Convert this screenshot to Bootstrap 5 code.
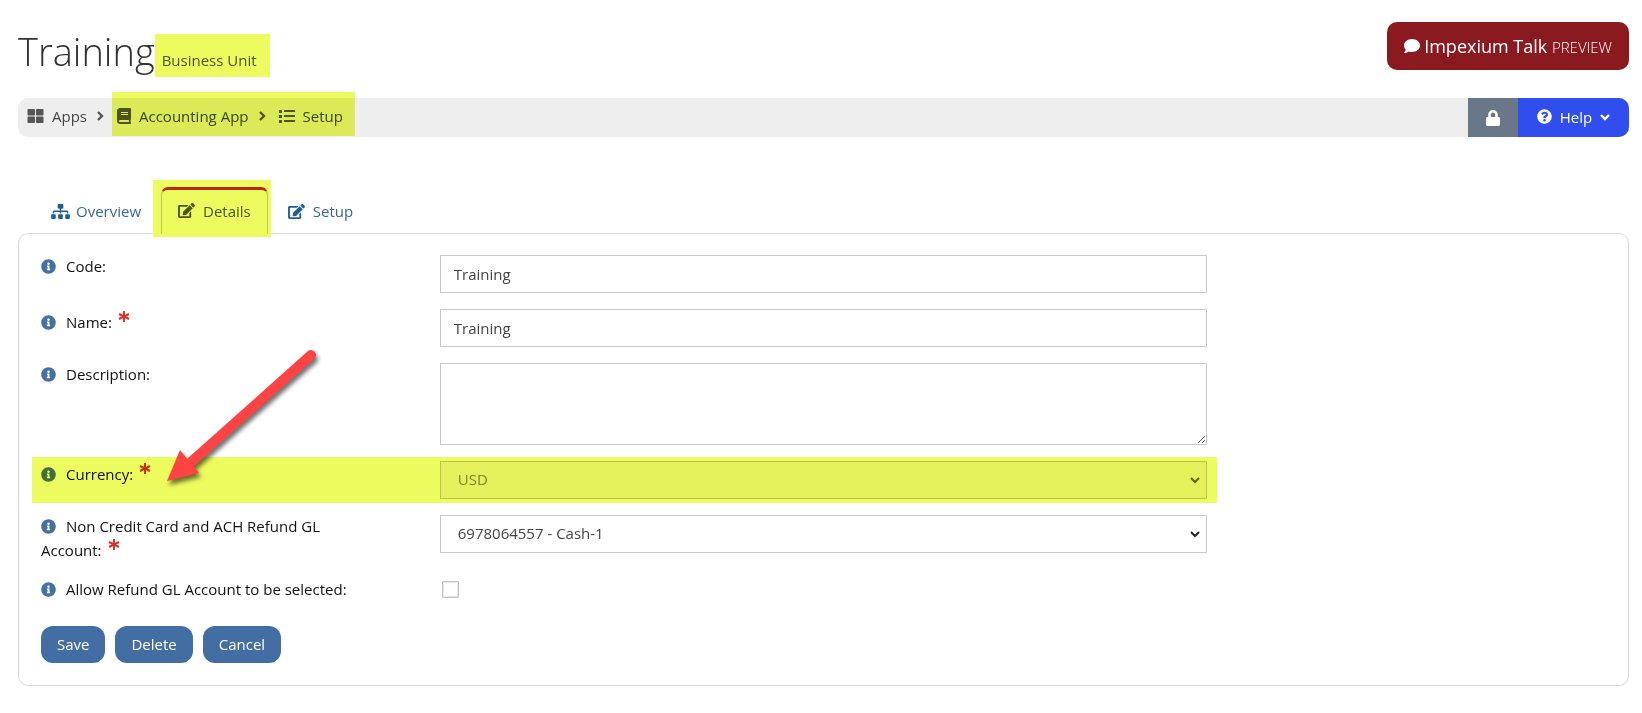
<!DOCTYPE html>
<html lang="en">
<head>
<meta charset="utf-8">
<meta name="viewport" content="width=device-width, initial-scale=1">
<title>Training - Business Unit</title>
<link href="https://cdn.jsdelivr.net/npm/bootstrap@5.3.0/dist/css/bootstrap.min.css" rel="stylesheet">
<style>
  body { font-family: "Open Sans", "Noto Sans", sans-serif; font-size: 15px; line-height: 24px; color: #333; background: #fff; }
  a { text-decoration: none; color: inherit; }
  svg { fill: currentColor; flex: none; }
  .page { padding: 22px 13px 26px 18px; }

  .page-head { height: 48px; }
  .page-title { font-size: 38px; font-weight: 300; line-height: 58px; }
  .unit-label { font-size: 15px; font-weight: 400; color: #555; margin-left: 7px; }
  .talk-btn { background: #8a1a1f; color: #fff; border: 0; border-radius: 10px; padding: 0 17px; height: 48px; font-size: 18px; }
  .talk-btn:hover { background: #76151a; color: #fff; }
  .talk-btn small { font-size: 15px; font-weight: 300; }

  /* highlighter strokes laid over the marked content */
  .marked { position: relative; }
  .marked::after { content: ""; position: absolute; inset: var(--mark-inset); background: #ecfb5d; mix-blend-mode: multiply; pointer-events: none; z-index: 2; }
  .mark-unit { --mark-inset: -8px -13px 2px -7px; display: inline-block; line-height: 37px; }
  .mark-trail { --mark-inset: -6px -12px 1px -5px; }
  .mark-tab { --mark-inset: -7px -3px -4px -8px; }
  .mark-row { --mark-inset: -4px calc(25% + 5px) -4px 6px; }

  .trail { margin-top: 28px; height: 39px; background: #eee; border-radius: 10px; color: #444; }
  .trail svg { color: #555; }
  .trail-links { height: 39px; }
  .trail-links a, .trail-links > svg, .mark-trail > svg { margin-bottom: 3px; }
  .trail-btn { border: 0; height: 39px; color: #fff; padding-bottom: 3px; }
  .trail .trail-btn svg { color: #fff; }
  .lock-btn { background: #687889; width: 50px; }
  .help-btn { background: #304eee; width: 111px; border-radius: 0 10px 10px 0; }

  .unit-tabs { margin-top: 50px; padding-left: 16px; border: 0; gap: 3px; position: relative; z-index: 1; }
  .unit-tabs .nav-link { padding: 0 16px; height: 46px; border: 1px solid transparent; border-top: 3px solid transparent; border-radius: 7px 7px 0 0; color: #3a6491; display: flex; align-items: center; gap: 8px; margin: 0; }
  .unit-tabs .tab-overview { gap: 6px; }
  .unit-tabs .nav-link svg { color: #205f96; }
  .unit-tabs .nav-link.active { background: #fff; border-color: #c8292d #ccc #fff; color: #555; height: 47px; margin-bottom: -1px; padding-bottom: 2px; }
  .unit-tabs .nav-link.active svg { color: #555; }

  .panel { border: 1px solid #d8d8d8; border-radius: 10px; padding: 21px 7px 22px; }
  .panel .row { --bs-gutter-x: 30px; margin: 0 0 16px; }
  .field-label { color: #111; line-height: 22px; padding-right: 48px; }
  .field-label.with-star { padding-top: 1px; }
  .field-label.two-line { line-height: 23px; }
  .info { color: #4470a5; width: 15px; height: 15px; margin-right: 10px; vertical-align: -2px; }
  .star { width: 12px; height: 13px; margin-left: 6px; vertical-align: 5px; stroke: #dc3127; stroke-width: 2; fill: none; }
  .panel .form-control, .panel .form-select { height: 38px; border: 1px solid #c8c8c8; border-radius: 0; color: #444; font-size: 15px; padding: 0 13px; line-height: 24px; }
  .panel textarea.form-control { height: 82px; padding: 8px 13px; }
  .panel .form-select { padding-left: 17px; padding-bottom: 2px; background-position: right 5px center; background-size: 12px 12px;
    background-image: url("data:image/svg+xml,%3Csvg xmlns='http://www.w3.org/2000/svg' viewBox='0 0 12 12'%3E%3Cpath d='M2 4l4 4 4-4' fill='none' stroke='%23222' stroke-width='2'/%3E%3C/svg%3E"); }
  .panel .form-select:disabled { background-color: #f7f5f7; opacity: 1; color: #888;
    background-image: url("data:image/svg+xml,%3Csvg xmlns='http://www.w3.org/2000/svg' viewBox='0 0 12 12'%3E%3Cpath d='M2 4l4 4 4-4' fill='none' stroke='%23666' stroke-width='2'/%3E%3C/svg%3E"); }
  .panel .form-check-input { width: 17px; height: 17px; margin: 3px 0 2px 2px; border: 1px solid #c3c3c3; box-shadow: inset 0 0 0 1px #e6e6e6; border-radius: 1px; display: block; float: none; }
  .actions { gap: 10px; padding: 10px 15px 0; }
  .act-btn { background: #436ea4; color: #fff; border: 0; border-radius: 12px; height: 37px; padding: 0 16px; font-size: 15px; }
  .act-btn:hover { background: #365a88; color: #fff; }
  .panel .pointer-arrow { position: absolute; left: 138px; top: -114px; width: 156px; height: 140px; padding: 0; margin: 0; z-index: 3; pointer-events: none; filter: drop-shadow(2px 4px 2px rgba(0,0,0,.55)); }
</style>
</head>
<body>
<svg width="0" height="0" class="position-absolute" aria-hidden="true">
  <symbol id="i-info" viewBox="0 0 512 512"><path d="M256 8C119.043 8 8 119.083 8 256c0 136.997 111.043 248 248 248s248-111.003 248-248C504 119.083 392.957 8 256 8zm0 110c23.196 0 42 18.804 42 42s-18.804 42-42 42-42-18.804-42-42 18.804-42 42-42zm56 254c0 6.627-5.373 12-12 12h-88c-6.627 0-12-5.373-12-12v-24c0-6.627 5.373-12 12-12h12v-64h-12c-6.627 0-12-5.373-12-12v-24c0-6.627 5.373-12 12-12h64c6.627 0 12 5.373 12 12v100h12c6.627 0 12 5.373 12 12v24z"/></symbol>
  <symbol id="i-star" viewBox="0 0 12 13"><path d="M6 1v11M1 4l10 5M11 4L1 9"/></symbol>
  <symbol id="i-chevron" viewBox="0 0 8 12"><path d="M2 2l4 4-4 4" fill="none" stroke="currentColor" stroke-width="2.4"/></symbol>
  <symbol id="i-edit" viewBox="0 0 576 512"><path d="M402.6 83.2l90.2 90.2c3.8 3.8 3.8 10 0 13.8L274.4 405.6l-92.8 10.3c-12.4 1.4-22.9-9.1-21.5-21.5l10.3-92.8L388.8 83.2c3.800-3.800 10-3.800 13.800 0zm162-22.9l-48.8-48.8c-15.2-15.2-39.9-15.2-55.2 0l-35.4 35.4c-3.8 3.8-3.8 10 0 13.8l90.2 90.2c3.8 3.8 10 3.8 13.8 0l35.4-35.4c15.2-15.3 15.2-40 0-55.2zM384 346.2V448H64V128h229.8c3.2 0 6.2-1.3 8.5-3.5l40-40c7.6-7.6 2.2-20.5-8.5-20.500H48C21.5 64 0 85.5 0 112v352c0 26.5 21.5 48 48 48h352c26.5 0 48-21.5 48-48V306.2c0-10.7-12.9-16-20.5-8.5l-40 40c-2.2 2.3-3.5 5.3-3.5 8.5z"/></symbol>
</svg>

<main class="page container-fluid">
  <header class="page-head d-flex justify-content-between align-items-start">
    <h1 class="page-title m-0">Training<span class="unit-label marked mark-unit">Business Unit</span></h1>
    <button type="button" class="btn talk-btn d-flex align-items-center">
      <svg width="16" height="16" viewBox="0 0 512 512" class="me-1"><path d="M256 32C114.600 32 0 125.100 0 240c0 49.600 21.400 95 57 130.700C44.500 421.100 2.700 466 2.200 466.500c-2.200 2.300-2.800 5.700-1.500 8.700S4.800 480 8 480c66.300 0 116-31.800 140.600-51.400 32.700 12.300 69 19.400 107.400 19.400 141.400 0 256-93.100 256-208S397.400 32 256 32z"/></svg>
      <span>Impexium Talk <small>PREVIEW</small></span>
    </button>
  </header>

  <nav class="trail d-flex align-items-center justify-content-between" aria-label="Breadcrumb">
    <div class="trail-links d-flex align-items-center ps-2">
      <a href="#" class="d-flex align-items-center ps-0 ms-0"><svg width="18" height="16" viewBox="-32 0 544 512" class="me-2"><path d="M296 32h192c13.255 0 24 10.745 24 24v160c0 13.255-10.745 24-24 24H296c-13.255 0-24-10.745-24-24V56c0-13.255 10.745-24 24-24zm-80 0H24C10.745 32 0 42.745 0 56v160c0 13.255 10.745 24 24 24h192c13.255 0 24-10.745 24-24V56c0-13.255-10.745-24-24-24zM0 296v160c0 13.255 10.745 24 24 24h192c13.255 0 24-10.745 24-24V296c0-13.255-10.745-24-24-24H24c-13.255 0-24 10.745-24 24zm296 184h192c13.255 0 24-10.745 24-24V296c0-13.255-10.745-24-24-24H296c-13.255 0-24 10.745-24 24v160c0 13.255 10.745 24 24 24z"/></svg>Apps</a>
      <svg width="10" height="12" class="mx-2"><use href="#i-chevron"/></svg>
      <div class="marked mark-trail d-flex align-items-center h-100 ms-1">
        <a href="#" class="d-flex align-items-center"><svg width="14" height="16" viewBox="0 0 448 512" class="me-2"><path d="M448 360V24c0-13.300-10.700-24-24-24H96C43 0 0 43 0 96v320c0 53 43 96 96 96h328c13.300 0 24-10.700 24-24v-16c0-7.500-3.500-14.300-8.900-18.700-4.200-15.400-4.200-59.300 0-74.700 5.400-4.300 8.900-11.100 8.900-18.600zM128 134c0-3.300 2.700-6 6-6h212c3.300 0 6 2.700 6 6v20c0 3.300-2.700 6-6 6H134c-3.300 0-6-2.700-6-6v-20zm0 64c0-3.300 2.700-6 6-6h212c3.300 0 6 2.700 6 6v20c0 3.300-2.700 6-6 6H134c-3.300 0-6-2.700-6-6v-20zm253.400 250H96c-17.700 0-32-14.300-32-32 0-17.600 14.400-32 32-32h285.400c-1.900 17.100-1.900 46.900 0 64z"/></svg>Accounting App</a>
        <svg width="10" height="12" class="mx-2"><use href="#i-chevron"/></svg>
        <a href="#" class="d-flex align-items-center ms-1"><svg width="16" height="14" viewBox="0 0 16 14" class="me-2"><path d="M0 1h3v3H0zM0 6h3v3H0zM0 11h3v3H0zM5 1h11v2H5zM5 6h11v2H5zM5 11h11v2H5z"/></svg>Setup</a>
      </div>
    </div>
    <div class="d-flex">
      <button type="button" class="trail-btn lock-btn" aria-label="Lock"><svg width="14" height="16" viewBox="0 0 448 512"><path d="M400 224h-24v-72C376 68.200 307.800 0 224 0S72 68.200 72 152v72H48c-26.500 0-48 21.500-48 48v192c0 26.500 21.500 48 48 48h352c26.500 0 48-21.500 48-48V272c0-26.500-21.500-48-48-48zm-104 0H152v-72c0-39.700 32.300-72 72-72s72 32.300 72 72v72z"/></svg></button>
      <button type="button" class="trail-btn help-btn d-flex align-items-center justify-content-center"><svg width="15" height="15" viewBox="0 0 512 512" class="me-2"><path d="M504 256c0 136.997-111.043 248-248 248S8 392.997 8 256C8 119.083 119.043 8 256 8s248 111.083 248 248zM262.655 90c-54.497 0-89.255 22.957-116.549 63.758-3.536 5.286-2.353 12.415 2.715 16.258l34.699 26.310c5.205 3.947 12.621 3.008 16.665-2.122 17.864-22.658 30.113-35.797 57.303-35.797 20.429 0 45.698 13.148 45.698 32.958 0 14.976-12.363 22.667-32.534 33.976C247.128 238.528 216 254.941 216 296v4c0 6.627 5.373 12 12 12h56c6.627 0 12-5.373 12-12v-1.333c0-28.462 83.186-29.647 83.186-106.667 0-58.002-60.165-102-116.531-102zM256 338c-25.365 0-46 20.635-46 46 0 25.364 20.635 46 46 46s46-20.636 46-46c0-25.365-20.635-46-46-46z"/></svg>Help<svg width="10" height="8" viewBox="0 0 10 8" class="ms-2"><path d="M1 2l4 4 4-4" fill="none" stroke="currentColor" stroke-width="2.400"/></svg></button>
    </div>
  </nav>

  <ul class="nav nav-tabs unit-tabs">
    <li class="nav-item"><a class="nav-link tab-overview" href="#"><svg width="19" height="15" viewBox="0 0 640 512"><path d="M128 352H32c-17.670 0-32 14.330-32 32v96c0 17.670 14.330 32 32 32h96c17.670 0 32-14.330 32-32v-96c0-17.670-14.330-32-32-32zm-24-80h192v48h48v-48h192v48h48v-57.590c0-21.170-17.230-38.410-38.410-38.410H344v-64h40c17.670 0 32-14.330 32-32V32c0-17.670-14.330-32-32-32H256c-17.670 0-32 14.330-32 32v96c0 17.670 14.330 32 32 32h40v64H94.410C73.230 224 56 241.230 56 262.410V320h48v-48zm264 80h-96c-17.670 0-32 14.330-32 32v96c0 17.670 14.330 32 32 32h96c17.670 0 32-14.330 32-32v-96c0-17.670-14.330-32-32-32zm240 0h-96c-17.670 0-32 14.330-32 32v96c0 17.670 14.330 32 32 32h96c17.670 0 32-14.330 32-32v-96c0-17.670-14.330-32-32-32z"/></svg>Overview</a></li>
    <li class="nav-item marked mark-tab"><a class="nav-link active" aria-current="page" href="#"><svg width="17" height="15"><use href="#i-edit"/></svg>Details</a></li>
    <li class="nav-item"><a class="nav-link" href="#"><svg width="17" height="15"><use href="#i-edit"/></svg>Setup</a></li>
  </ul>

  <form class="panel">
    <div class="row">
      <label class="col-3 field-label" for="code"><svg class="info"><use href="#i-info"/></svg>Code:</label>
      <div class="col-6"><input id="code" type="text" class="form-control" value="Training"></div>
    </div>
    <div class="row">
      <label class="col-3 field-label with-star" for="name"><svg class="info"><use href="#i-info"/></svg>Name:<svg class="star"><use href="#i-star"/></svg></label>
      <div class="col-6"><input id="name" type="text" class="form-control" value="Training"></div>
    </div>
    <div class="row">
      <label class="col-3 field-label" for="description"><svg class="info"><use href="#i-info"/></svg>Description:</label>
      <div class="col-6"><textarea id="description" class="form-control"></textarea></div>
    </div>
    <div class="row marked mark-row">
      <label class="col-3 field-label with-star" for="currency"><svg class="info"><use href="#i-info"/></svg>Currency:<svg class="star"><use href="#i-star"/></svg></label>
      <div class="col-6"><select id="currency" class="form-select" disabled><option>USD</option></select></div>
      <svg class="pointer-arrow" viewBox="0 0 156 140"><path d="M147 8L26 116" stroke="#ff4343" stroke-width="10" stroke-linecap="round"/><path d="M3 134L16 103L35 126z" fill="#ff4343"/></svg>
    </div>
    <div class="row">
      <label class="col-3 field-label two-line" for="account"><svg class="info"><use href="#i-info"/></svg>Non Credit Card and ACH Refund GL Account:<svg class="star"><use href="#i-star"/></svg></label>
      <div class="col-6"><select id="account" class="form-select"><option>6978064557 - Cash-1</option></select></div>
    </div>
    <div class="row">
      <label class="col-3 field-label" for="allow"><svg class="info"><use href="#i-info"/></svg>Allow Refund GL Account to be selected:</label>
      <div class="col-6"><input id="allow" type="checkbox" class="form-check-input"></div>
    </div>
    <div class="actions d-flex">
      <button type="submit" class="btn act-btn">Save</button>
      <button type="button" class="btn act-btn">Delete</button>
      <button type="button" class="btn act-btn">Cancel</button>
    </div>
  </form>
</main>
<script src="https://cdn.jsdelivr.net/npm/bootstrap@5.3.0/dist/js/bootstrap.bundle.min.js"></script>
</body>
</html>
